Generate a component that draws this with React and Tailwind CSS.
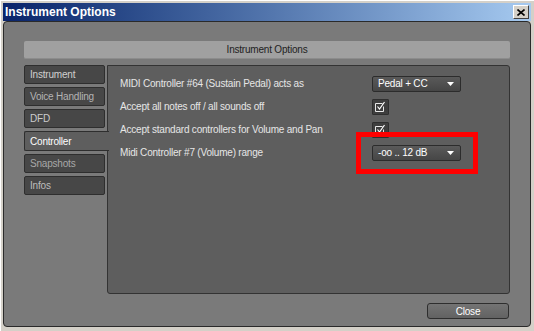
import React from "react";

const tabs = [
  { label: "Instrument", color: "text-[#d0d0d0]" },
  { label: "Voice Handling", color: "text-[#b4b4b4]" },
  { label: "DFD", color: "text-[#cccccc]" },
  { label: "Controller", active: true },
  { label: "Snapshots", color: "text-[#a8a8a8]" },
  { label: "Infos", color: "text-[#bdbdbd]" },
];

function Dropdown({ value }) {
  return (
    <div className="flex h-[16px] w-[89px] items-center justify-between rounded-[2px] border border-[#2c2c2c] bg-gradient-to-b from-[#5a5a5a] to-[#464646] pl-[5px] pr-[6px] text-white">
      <span>{value}</span>
      <svg width="7" height="4" viewBox="0 0 7 4">
        <path d="M0 0h7L3.5 4z" fill="#ffffff" />
      </svg>
    </div>
  );
}

function Checkbox() {
  return (
    <div className="flex h-[16px] w-[17px] items-center justify-center rounded-[1px] border border-[#2f2f2f] bg-[#3e3e3e]">
      <svg width="11" height="11" viewBox="0 0 11 11">
        <path d="M0.5 2.5h7M0.5 2.5v8h8v-5" stroke="#e8e8e8" fill="none" />
        <path d="M2.5 5.5l2 2.5 5-7" stroke="#ffffff" strokeWidth="1.2" fill="none" />
      </svg>
    </div>
  );
}

export default function App() {
  return (
    <div
      className="relative flex h-[331px] w-[534px] flex-col border-l border-t border-white bg-[#d4d0c8] pb-[4px] pl-[2px] pr-[3px] pt-[2px]"
      style={{ fontFamily: '"Liberation Sans", Arial, sans-serif' }}
    >
      {/* title bar */}
      <div className="flex h-[18px] shrink-0 items-center justify-between bg-gradient-to-r from-[#0a246a] to-[#a6caf0] pl-[2px] pr-[2px]">
        <span className="text-[12px] font-bold text-white">Instrument Options</span>
        <div className="flex h-[14px] w-[16px] items-center justify-center border border-b-[#404040] border-l-white border-r-[#404040] border-t-white bg-[#d4d0c8]">
          <svg width="8" height="7" viewBox="0 0 8 7">
            <path d="M0.5 0.5l7 6M7.5 0.5l-7 6" stroke="#000" strokeWidth="1.6" />
          </svg>
        </div>
      </div>

      {/* main gray area */}
      <div className="flex flex-1 flex-col rounded-[4px] border border-[#2a2a2a] bg-[#7a7a7a] px-[20px] pb-[6px] pt-[19px] text-[10px] tracking-[-0.2px]">
        <div className="flex h-[18px] shrink-0 items-center justify-center rounded-[2px] border-b border-[#8c8c8c] bg-[#a0a0a0] text-[#222]">
          Instrument Options
        </div>

        <div className="mt-[6px] flex h-[229px] shrink-0">
          <div className="flex w-[83px] shrink-0 flex-col gap-[3px]">
            {tabs.map((t) =>
              t.active ? (
                <div
                  key={t.label}
                  className="relative z-10 -mr-[2px] flex h-[20px] items-center rounded-l-[2px] border border-r-0 border-[#2e2e2e] bg-[#5e5e5e] pl-[5px] text-white"
                >
                  {t.label}
                </div>
              ) : (
                <div
                  key={t.label}
                  className={`mr-[2px] flex h-[19px] items-center rounded-[2px] border border-[#2e2e2e] bg-[#474747] pl-[5px] ${t.color}`}
                >
                  {t.label}
                </div>
              )
            )}
          </div>

          <div className="flex-1 rounded-r-[3px] rounded-bl-[3px] border border-[#333] bg-[#5e5e5e] pl-[12px] pt-[6px] text-[#e6e6e6]">
            <div className="grid grid-cols-[252px_auto] auto-rows-[23px] items-center">
              <span>MIDI Controller #64 (Sustain Pedal) acts as</span>
              <Dropdown value="Pedal + CC" />
              <span>Accept all notes off / all sounds off</span>
              <Checkbox />
              <span>Accept standard controllers for Volume and Pan</span>
              <Checkbox />
              <span>Midi Controller #7 (Volume) range</span>
              <Dropdown value="-oo .. 12 dB" />
            </div>
          </div>
        </div>

        <div className="mt-[9px] flex justify-end pr-[1px]">
          <button className="h-[16px] w-[82px] rounded-[3px] border border-[#2e2e2e] bg-gradient-to-b from-[#747474] to-[#626262] text-[10px] text-white">
            Close
          </button>
        </div>
      </div>

      {/* highlight annotation */}
      <div className="absolute left-[355px] top-[131px] h-[42px] w-[122px] border-[5px] border-[#ff0000]" />
    </div>
  );
}
